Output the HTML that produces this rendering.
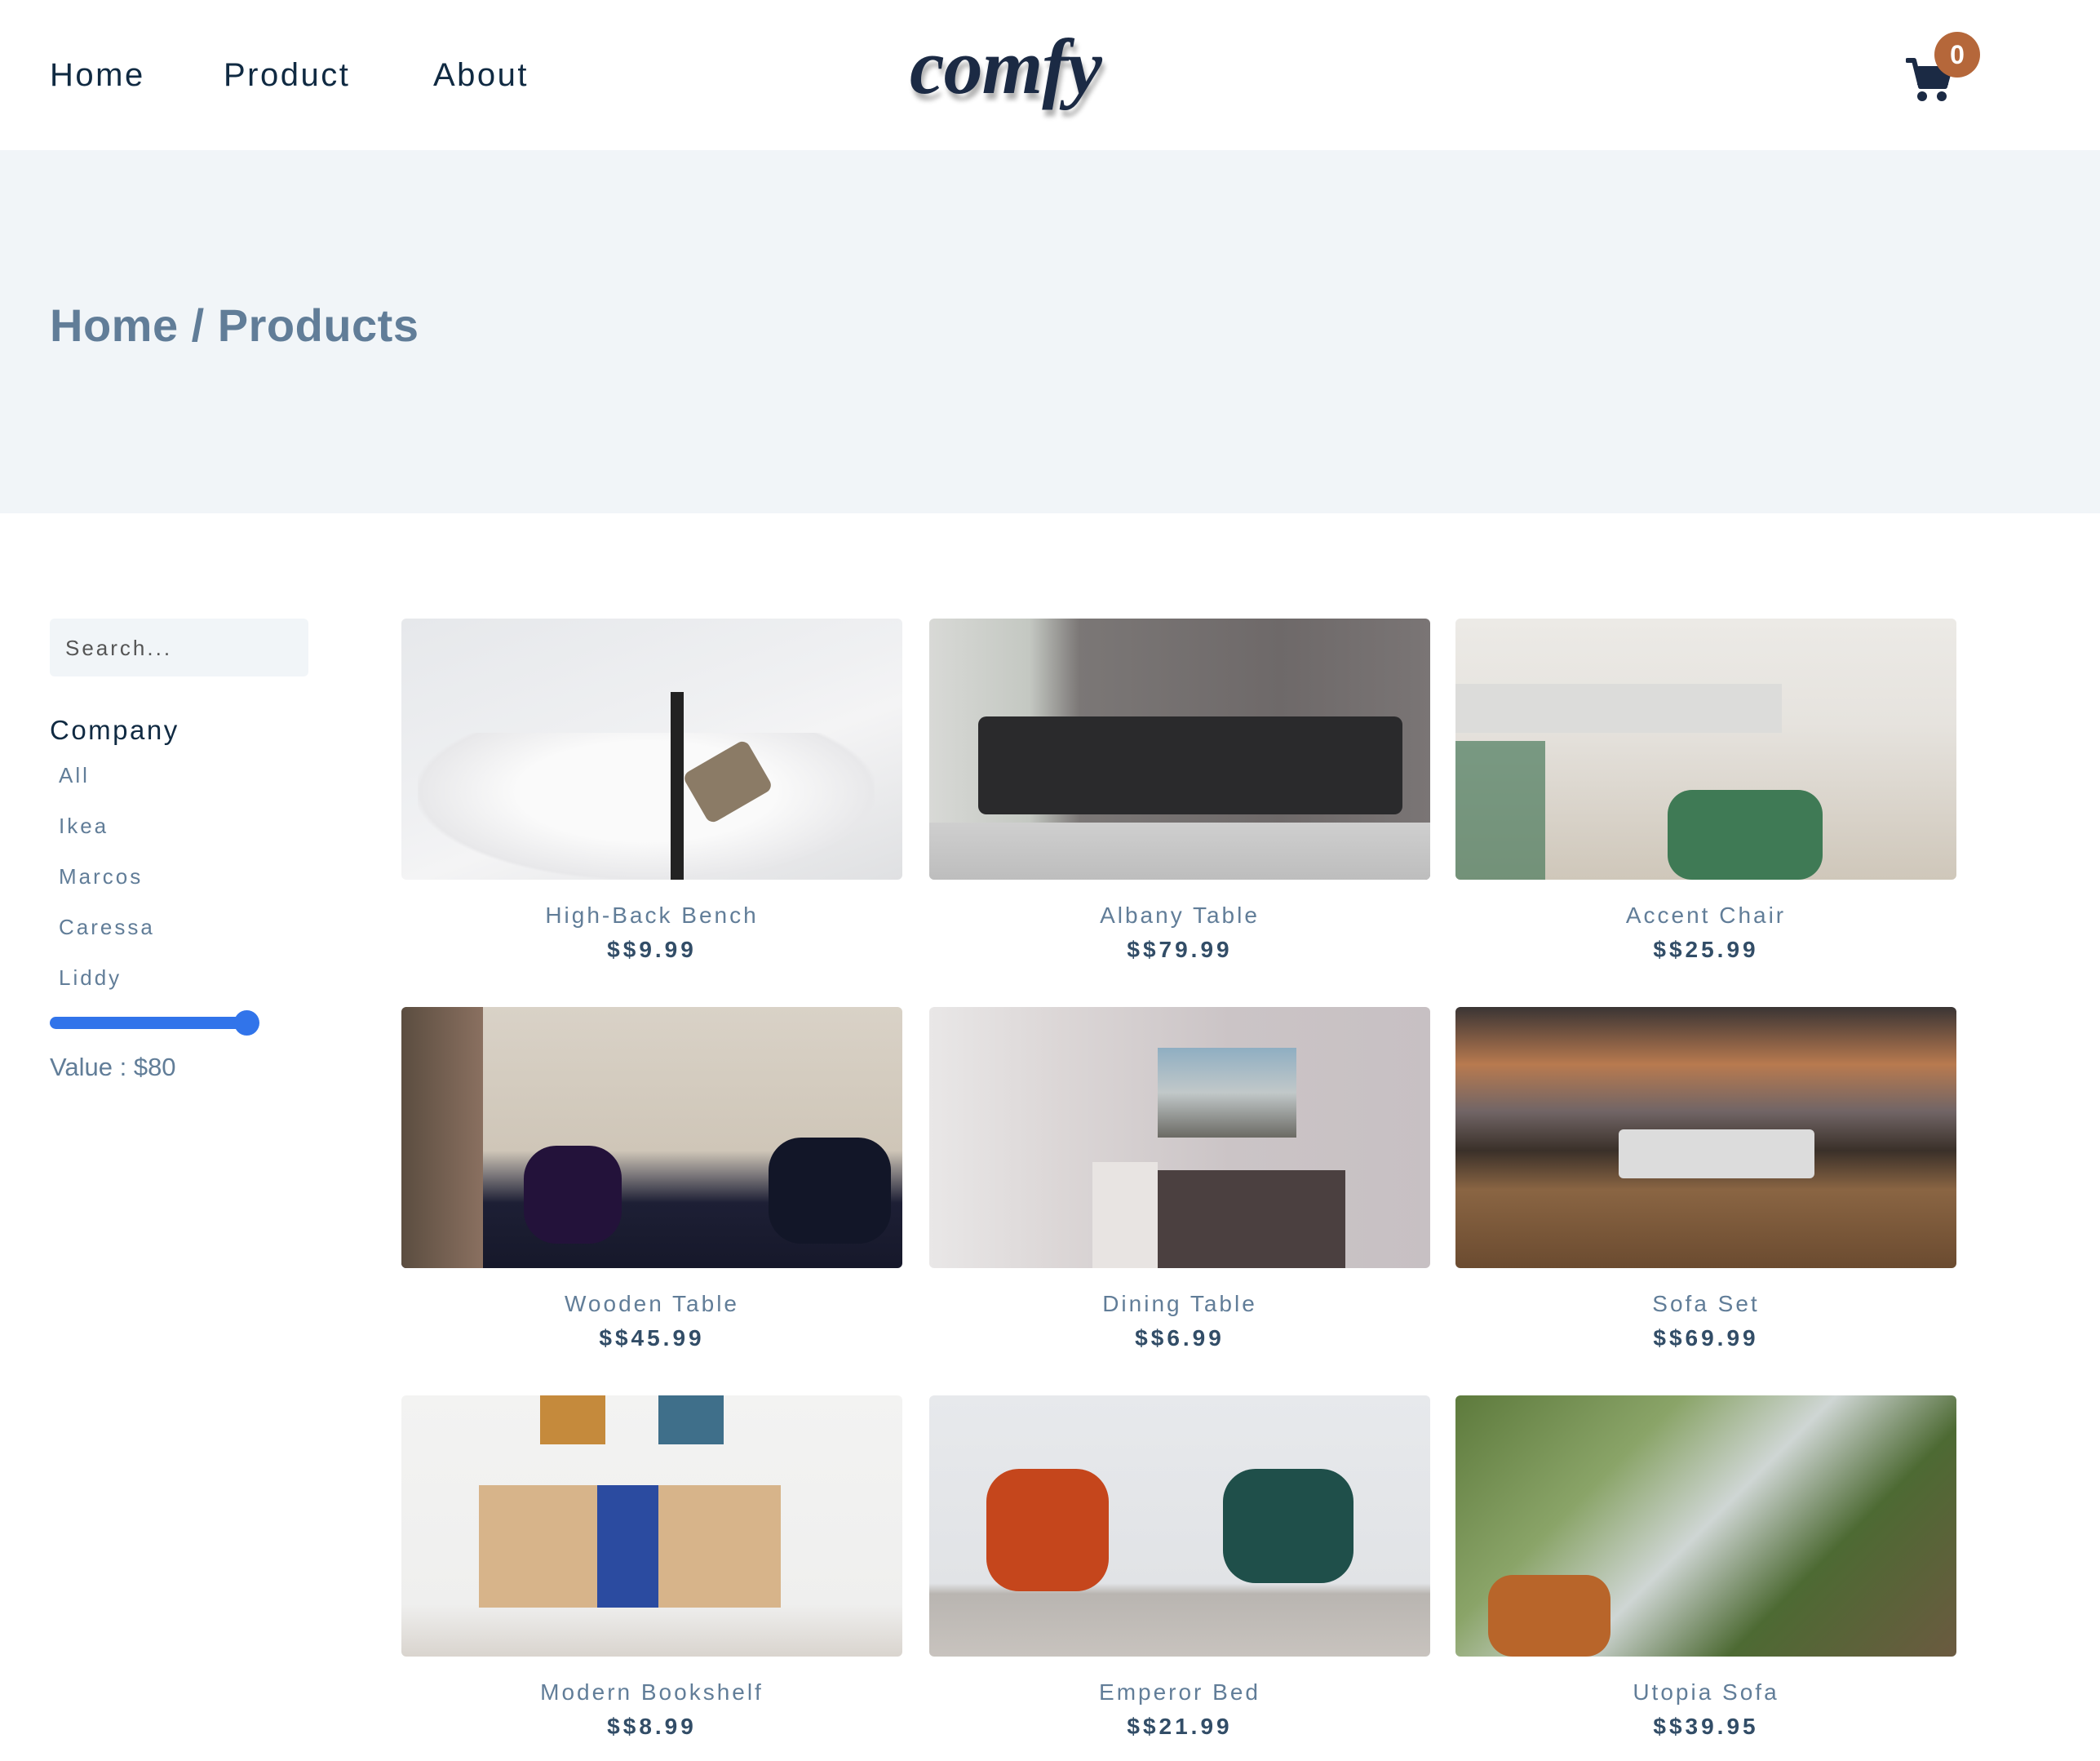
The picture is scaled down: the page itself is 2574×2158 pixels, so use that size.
<!DOCTYPE html>
<html><head><meta charset="utf-8"><style>
*{margin:0;padding:0;box-sizing:border-box}
body{width:2574px;height:2158px;overflow:hidden;background:#fff;font-family:"Liberation Sans",sans-serif;position:relative}
.a{position:absolute;white-space:nowrap}
.nav{top:70px;font-size:40px;color:#102a42;letter-spacing:2.5px}
.logo{left:1115px;top:26px;font-family:"Liberation Serif",serif;font-style:italic;font-weight:bold;font-size:96px;color:#1b2a44;text-shadow:3px 8px 6px rgba(0,0,0,.3);letter-spacing:-1px}
.hero{left:0;top:184px;width:2574px;height:445px;background:#f1f5f8}
.ht{left:61px;top:366px;font-size:56px;font-weight:bold;color:#617d98;letter-spacing:0.5px}
.search{left:61px;top:758px;width:317px;height:71px;background:#f1f5f8;border-radius:6px;font-size:26px;color:#555;letter-spacing:3px;padding:21px 0 0 19px}
.co{left:61px;top:876px;font-size:33px;color:#102a42;letter-spacing:2.5px}
.li{left:72px;font-size:26px;color:#617d98;letter-spacing:3px}
.track{left:61px;top:1246px;width:245px;height:15px;background:#3174ea;border-radius:8px}
.thumb{left:287px;top:1238px;width:31px;height:31px;background:#3174ea;border-radius:50%}
.val{left:61px;top:1290px;font-size:31px;color:#617d98}
.img{position:absolute;width:614px;height:320px;border-radius:6px;overflow:hidden}
.nm{position:absolute;width:614px;text-align:center;font-size:28px;color:#617d98;letter-spacing:3px}
.pr{position:absolute;width:614px;text-align:center;font-size:28px;font-weight:bold;color:#324d67;letter-spacing:4px}
</style></head><body>
<div class="a nav" style="left:61px">Home</div>
<div class="a nav" style="left:274px">Product</div>
<div class="a nav" style="left:531px">About</div>
<div class="a logo">comfy</div>
<svg class="a" style="left:2336px;top:70px" width="60" height="56" viewBox="0 0 60 56"><path d="M2 4h8l8 32h30l6-22H16" fill="none" stroke="#1b2a44" stroke-width="6" stroke-linejoin="round" stroke-linecap="round"/><rect x="14" y="14" width="38" height="20" fill="#1b2a44"/><circle cx="20" cy="48" r="6" fill="#1b2a44"/><circle cx="44" cy="48" r="6" fill="#1b2a44"/></svg>
<div class="a" style="left:2371px;top:39px;width:56px;height:56px;border-radius:50%;background:#b5673a;color:#fff;font-size:32px;font-weight:bold;text-align:center;line-height:56px">0</div>
<div class="a hero"></div>
<div class="a ht">Home / Products</div>
<div class="a search">Search...</div>
<div class="a co">Company</div>
<div class="a li" style="top:935px">All</div>
<div class="a li" style="top:997px">Ikea</div>
<div class="a li" style="top:1059px">Marcos</div>
<div class="a li" style="top:1121px">Caressa</div>
<div class="a li" style="top:1183px">Liddy</div>
<div class="a track"></div><div class="a thumb"></div>
<div class="a val">Value : $80</div>

<div class="img" style="left:492px;top:758px;background:linear-gradient(160deg,#e6e8eb 0%,#eff0f2 45%,#f4f4f5 60%,#dfe0e2 100%)"><div style="position:absolute;left:20px;top:140px;width:560px;height:180px;background:radial-gradient(ellipse at 50% 40%,#fafafa 40%,#e8e8ea 70%,transparent 72%)"></div><div style="position:absolute;left:330px;top:90px;width:16px;height:230px;background:#222"></div><div style="position:absolute;left:355px;top:165px;width:90px;height:70px;background:#8b7b66;transform:rotate(-30deg);border-radius:10px"></div></div>
<div class="img" style="left:1139px;top:758px;background:linear-gradient(90deg,#d8d9d6 0%,#c4c8c2 20%,#7b7776 30%,#6e6969 70%,#7a7575 100%)"><div style="position:absolute;left:60px;top:120px;width:520px;height:120px;background:#2a2a2c;border-radius:10px"></div><div style="position:absolute;left:0;top:250px;width:614px;height:70px;background:linear-gradient(#cfcfcf,#bdbdbd)"></div></div>
<div class="img" style="left:1784px;top:758px;background:linear-gradient(180deg,#eceae6 0%,#e6e3de 40%,#cfc7ba 100%)"><div style="position:absolute;left:0;top:80px;width:400px;height:60px;background:#dcdcda"></div><div style="position:absolute;left:260px;top:210px;width:190px;height:110px;background:#3f7a55;border-radius:30px"></div><div style="position:absolute;left:0;top:150px;width:110px;height:170px;background:#4c7b5c;opacity:.7"></div></div>

<div class="img" style="left:492px;top:1234px;background:linear-gradient(180deg,#d9d2c7 0%,#cfc6b8 55%,#1d1f35 75%,#16182a 100%)"><div style="position:absolute;left:0;top:0;width:100px;height:320px;background:linear-gradient(90deg,#5b4d40,#8a7060)"></div><div style="position:absolute;left:150px;top:170px;width:120px;height:120px;background:#23123a;border-radius:40px"></div><div style="position:absolute;left:450px;top:160px;width:150px;height:130px;background:#121628;border-radius:40px"></div></div>
<div class="img" style="left:1139px;top:1234px;background:linear-gradient(90deg,#e9e7e7 0%,#dcd7d7 25%,#cbc4c6 60%,#c7c0c3 100%)"><div style="position:absolute;left:280px;top:50px;width:170px;height:110px;background:linear-gradient(#8faec2,#c1c8c9 50%,#6b6a64)"></div><div style="position:absolute;left:240px;top:200px;width:270px;height:120px;background:#4b4040"></div><div style="position:absolute;left:200px;top:190px;width:80px;height:130px;background:#e8e4e2"></div></div>
<div class="img" style="left:1784px;top:1234px;background:linear-gradient(180deg,#3a3434 0%,#b87a4f 22%,#716566 40%,#3a3029 55%,#8a6543 70%,#6b4b30 100%)"><div style="position:absolute;left:200px;top:150px;width:240px;height:60px;background:#dcdcdc;border-radius:6px"></div></div>

<div class="img" style="left:492px;top:1710px;background:linear-gradient(180deg,#f3f3f2 0%,#efefee 80%,#d9d4ce 100%)"><div style="position:absolute;left:95px;top:110px;width:370px;height:150px;background:#d7b48a"></div><div style="position:absolute;left:240px;top:110px;width:75px;height:150px;background:#2b4ba0"></div><div style="position:absolute;left:170px;top:0;width:80px;height:60px;background:#c58a3c"></div><div style="position:absolute;left:315px;top:0;width:80px;height:60px;background:#3f6f8a"></div></div>
<div class="img" style="left:1139px;top:1710px;background:linear-gradient(180deg,#e7e9ec 0%,#e1e3e6 72%,#b9b5b1 76%,#c8c3be 100%)"><div style="position:absolute;left:70px;top:90px;width:150px;height:150px;background:#c5461c;border-radius:40px"></div><div style="position:absolute;left:360px;top:90px;width:160px;height:140px;background:#1f4f4a;border-radius:40px"></div></div>
<div class="img" style="left:1784px;top:1710px;background:linear-gradient(135deg,#5d7a3c 0%,#8aa468 30%,#cfd6d4 50%,#4d6a33 70%,#6b5a40 100%)"><div style="position:absolute;left:40px;top:220px;width:150px;height:100px;background:#b8652a;border-radius:30px"></div></div>

<div class="nm" style="left:492px;top:1106px">High-Back Bench</div><div class="pr" style="left:492px;top:1148px">$$9.99</div>
<div class="nm" style="left:1139px;top:1106px">Albany Table</div><div class="pr" style="left:1139px;top:1148px">$$79.99</div>
<div class="nm" style="left:1784px;top:1106px">Accent Chair</div><div class="pr" style="left:1784px;top:1148px">$$25.99</div>
<div class="nm" style="left:492px;top:1582px">Wooden Table</div><div class="pr" style="left:492px;top:1624px">$$45.99</div>
<div class="nm" style="left:1139px;top:1582px">Dining Table</div><div class="pr" style="left:1139px;top:1624px">$$6.99</div>
<div class="nm" style="left:1784px;top:1582px">Sofa Set</div><div class="pr" style="left:1784px;top:1624px">$$69.99</div>
<div class="nm" style="left:492px;top:2058px">Modern Bookshelf</div><div class="pr" style="left:492px;top:2100px">$$8.99</div>
<div class="nm" style="left:1139px;top:2058px">Emperor Bed</div><div class="pr" style="left:1139px;top:2100px">$$21.99</div>
<div class="nm" style="left:1784px;top:2058px">Utopia Sofa</div><div class="pr" style="left:1784px;top:2100px">$$39.95</div>
</body></html>
